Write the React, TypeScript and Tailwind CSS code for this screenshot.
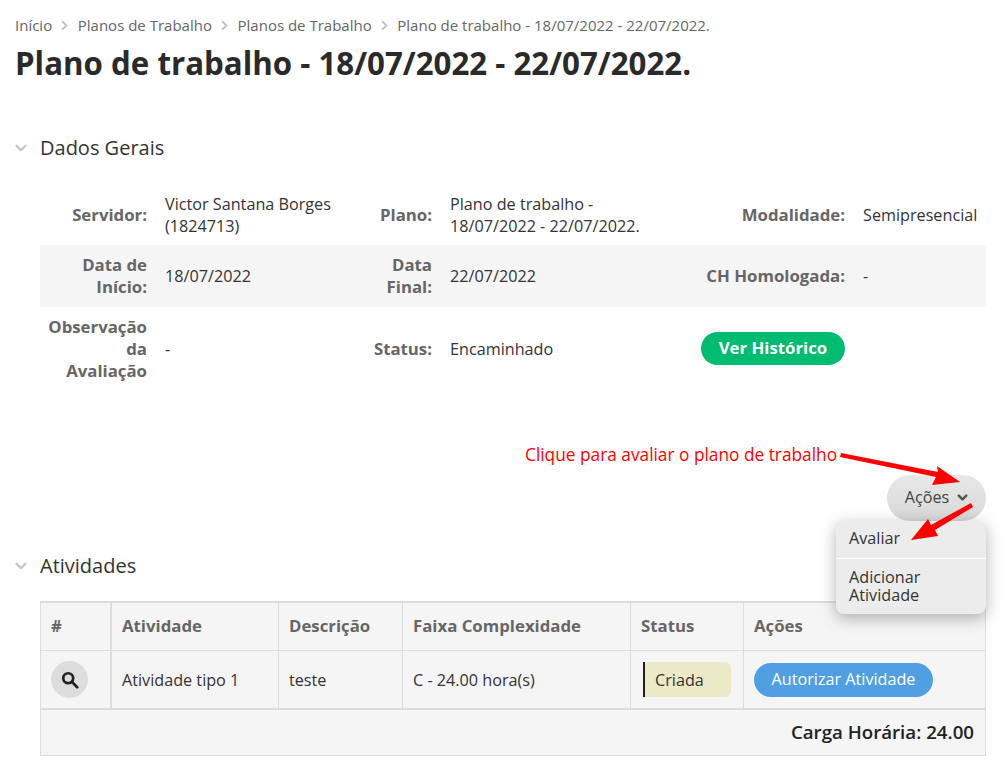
import React from "react";
import { ChevronDown, ChevronRight } from "lucide-react";

const crumbs = ["Início", "Planos de Trabalho", "Planos de Trabalho", "Plano de trabalho - 18/07/2022 - 22/07/2022."];

const Label = ({ children }: { children: React.ReactNode }) => (
  <div className="px-[9px] text-right text-[16.8px] leading-[22px] font-bold text-[#666]">{children}</div>
);

const Value = ({ children }: { children: React.ReactNode }) => (
  <div className="px-[9px] text-[16.2px] leading-[22px] text-[#333]">{children}</div>
);

const Section = ({ title }: { title: string }) => (
  <div className="flex items-center h-[24px] pl-[12px]">
    <ChevronDown className="w-[18px] h-[18px] text-[#c4c4c4] mr-[10px]" strokeWidth={3} />
    <span className="text-[20px] text-[#333]">{title}</span>
  </div>
);

const headCell = "px-[10px] pb-[2px] flex items-center text-[16.8px] font-bold text-[#666] border-r border-[#ddd]";
const bodyCell = "px-[10px] flex items-center text-[16.2px] text-[#333] border-r border-[#ddd]";

const App: React.FC = () => {
  return (
    <div className="relative w-[1007px] h-[775px] overflow-hidden bg-white font-['Open_Sans',sans-serif]">
      {/* Breadcrumb */}
      <div className="flex items-center pl-[15px] pt-[15px] h-[35px] text-[15px] text-[#666]">
        {crumbs.map((c, i) => (
          <React.Fragment key={i}>
            {i > 0 && <ChevronRight className="w-[15px] h-[15px] mx-[5.3px] text-[#c4c4c4]" strokeWidth={3} />}
            <span>{c}</span>
          </React.Fragment>
        ))}
      </div>
      <h1 className="pl-[15px] mt-[6px] text-[31.25px] leading-[44px] font-bold text-[#2a2a2a]">
        Plano de trabalho - 18/07/2022 - 22/07/2022.
      </h1>

      {/* Dados Gerais */}
      <div className="mt-[51px]">
        <Section title="Dados Gerais" />
      </div>
      <div className="ml-[40px] mt-[24px] w-[946px] grid grid-cols-[116px_209px_76px_251px_162px_132px] items-center">
        <div className="contents">
          <div className="h-[61px] flex items-center justify-end"><Label>Servidor:</Label></div>
          <div className="h-[61px] flex items-center"><Value>Victor Santana Borges (1824713)</Value></div>
          <div className="h-[61px] flex items-center justify-end"><Label>Plano:</Label></div>
          <div className="h-[61px] flex items-center w-[220px]"><Value>Plano de trabalho - 18/07/2022 - 22/07/2022.</Value></div>
          <div className="h-[61px] flex items-center justify-end"><Label>Modalidade:</Label></div>
          <div className="h-[61px] flex items-center"><Value>Semipresencial</Value></div>
        </div>
        <div className="contents">
          <div className="h-[62px] bg-[#f5f5f5] flex items-center justify-end"><Label>Data de Início:</Label></div>
          <div className="h-[62px] bg-[#f5f5f5] flex items-center"><Value>18/07/2022</Value></div>
          <div className="h-[62px] bg-[#f5f5f5] flex items-center justify-end"><Label>Data Final:</Label></div>
          <div className="h-[62px] bg-[#f5f5f5] flex items-center"><Value>22/07/2022</Value></div>
          <div className="h-[62px] bg-[#f5f5f5] flex items-center justify-end"><Label>CH Homologada:</Label></div>
          <div className="h-[62px] bg-[#f5f5f5] flex items-center"><Value>-</Value></div>
        </div>
        <div className="contents">
          <div className="h-[84px] flex items-center justify-end"><Label>Observação da Avaliação</Label></div>
          <div className="h-[84px] flex items-center"><Value>-</Value></div>
          <div className="h-[84px] flex items-center justify-end"><Label>Status:</Label></div>
          <div className="h-[84px] flex items-center"><Value>Encaminhado</Value></div>
          <div className="h-[84px] flex items-center justify-end col-span-2 justify-self-start pl-[9px] pb-[2px]">
            <button className="h-[33px] w-[144px] rounded-full bg-[#00bb70] text-white text-[16.8px] font-bold">Ver Histórico</button>
          </div>
        </div>
      </div>

      {/* Ações */}
      <div className="relative flex justify-end pr-[21px] mt-[84px]">
        <button className="w-[99px] h-[46px] pb-[1px] rounded-full bg-gradient-to-b from-[#e8e8e8] to-[#d8d8d8] flex items-center justify-center text-[16.2px] text-[#444]">
          <span className="ml-[2px]">Ações</span>
          <ChevronDown className="w-[15px] h-[15px] ml-[6px] text-[#555]" strokeWidth={4} />
        </button>
      </div>

      {/* Atividades */}
      <div className="mt-[33px]">
        <Section title="Atividades" />
      </div>
      <div className="ml-[40px] mt-[23px] w-[946px] border border-[#ddd] border-t-2 bg-[#f5f5f5]">
        <div className="grid grid-cols-[71px_167px_124px_228px_113px_241px] h-[48px] border-b border-[#ddd]">
          <div className={`${headCell} border-r-2`}>#</div>
          <div className={headCell}>Atividade</div>
          <div className={headCell}>Descrição</div>
          <div className={headCell}>Faixa Complexidade</div>
          <div className={headCell}>Status</div>
          <div className={`${headCell} border-r-0`}>Ações</div>
        </div>
        <div className="grid grid-cols-[71px_167px_124px_228px_113px_241px] h-[59px] border-b-2 border-[#ddd]">
          <div className={`${bodyCell} border-r-2`}>
            <span className="w-[37px] h-[37px] rounded-full bg-[#ddd] flex items-center justify-center">
              <svg viewBox="0 0 20 20" className="w-[18px] h-[18px]" fill="none" stroke="#222" strokeWidth={3}>
                <circle cx="8" cy="8" r="5.5" />
                <path d="M12 12l6 6" strokeLinecap="round" />
              </svg>
            </span>
          </div>
          <div className={`${bodyCell} pt-[2px]`}>Atividade tipo 1</div>
          <div className={`${bodyCell} pt-[2px]`}>teste</div>
          <div className={`${bodyCell} pt-[2px]`}>C - 24.00 hora(s)</div>
          <div className={`${bodyCell} pl-[12px] pr-[12px]`}>
            <span className="w-full h-[35px] pt-[2px] bg-[#ece9c6] border-l-2 border-[#222] rounded-r-md flex items-center pl-[10px]">Criada</span>
          </div>
          <div className={`${bodyCell} border-r-0`}>
            <button className="w-[179px] h-[34px] rounded-full bg-[#519fe3] text-white text-[16.2px]">Autorizar Atividade</button>
          </div>
        </div>
        <div className="h-[45px] flex items-center justify-end pr-[11px] text-[18.7px] font-semibold text-[#222]">
          Carga Horária: 24.00
        </div>
      </div>

      {/* Dropdown menu */}
      <div className="absolute left-[836px] top-[521px] w-[150px] rounded-lg bg-[#ececec] shadow-[0_4px_16px_rgba(0,0,0,0.3)] text-[16.2px] leading-[18px] text-[#333]">
        <div className="h-[38px] pb-[3px] px-[13px] flex items-center border-b border-white">Avaliar</div>
        <div className="px-[13px] pt-[9px] pb-[10px]">Adicionar Atividade</div>
      </div>

      {/* Annotation */}
      <span className="absolute left-[525px] top-[443px] text-[17.3px] leading-[24px] text-[#f00]">Clique para avaliar o plano de trabalho</span>
      <svg className="absolute left-0 top-0 pointer-events-none" width="1007" height="775" fill="#f00">
        <polygon points="841,453 840,457 936,477 932,485 960,482 937,466 938,472" />
        <polygon points="971,503 973,507 935,530 938,536 911,540 928,519 931,525" />
      </svg>
    </div>
  );
};

export default App;
